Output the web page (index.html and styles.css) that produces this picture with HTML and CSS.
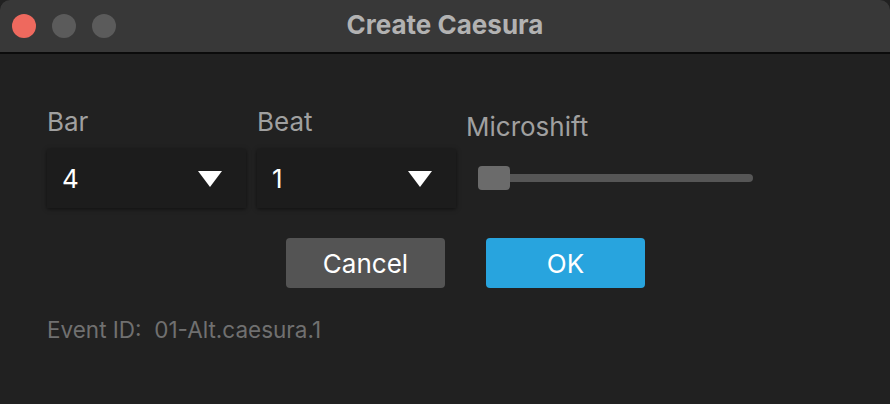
FILE: index.html
```html
<!DOCTYPE html>
<html>
<head>
<meta charset="utf-8">
<link rel="stylesheet" href="styles.css">
</head>
<body>
<div class="window">
  <div class="titlebar">
    <div class="lights">
      <span class="light red"></span>
      <span class="light gray"></span>
      <span class="light gray"></span>
    </div>
    <div class="title">Create Caesura</div>
  </div>
  <div class="content">
    <div class="fields">
      <div class="field">
        <div class="label">Bar</div>
        <div class="select"><span class="value">4</span><span class="caret"></span></div>
      </div>
      <div class="field">
        <div class="label">Beat</div>
        <div class="select"><span class="value">1</span><span class="caret"></span></div>
      </div>
      <div class="field micro">
        <div class="label">Microshift</div>
        <div class="slider"><div class="track"><div class="thumb"></div></div></div>
      </div>
    </div>
    <div class="buttons">
      <button class="btn cancel">Cancel</button>
      <button class="btn ok">OK</button>
    </div>
    <div class="event">Event ID:&nbsp; 01-Alt.caesura.1</div>
  </div>
</div>
</body>
</html>
```
FILE: styles.css
```css
html, body {
  margin: 0;
  padding: 0;
  background: #212121;
  width: 890px;
  height: 404px;
  overflow: hidden;
  font-family: Inter, "Noto Sans", sans-serif;
}
.window {
  width: 890px;
  height: 404px;
  background: #212121;
  border-radius: 10px 10px 0 0;
  overflow: hidden;
}
.titlebar {
  height: 52px;
  background: #383838;
  border-bottom: 2px solid #0b0b0b;
  display: flex;
  align-items: center;
  position: relative;
}
.lights {
  display: flex;
  gap: 16px;
  margin-left: 12px;
}
.light {
  width: 24px;
  height: 24px;
  border-radius: 50%;
  display: block;
}
.red { background: #ee695e; }
.gray { background: #5b5b5b; }
.title {
  position: absolute;
  left: 0;
  right: 0;
  top: 0;
  line-height: 50px;
  text-align: center;
  font-weight: 700;
  font-size: 26px;
  color: #b2b2b2;
}
.content {
  padding: 52px 0 0 47px;
}
.fields {
  display: flex;
  gap: 10px;
}
.field {
  width: 200px;
}
.field.micro {
  width: 300px;
  margin-left: -1px;
}
.label {
  font-size: 26px;
  line-height: 32px;
  color: #a0a0a0;
  height: 43px;
}
.micro .label {
  padding-top: 5px;
  height: 38px;
}
.select {
  height: 59px;
  width: 199px;
  background: #1c1c1c;
  box-shadow: 0 1px 4px rgba(0,0,0,0.55);
  display: flex;
  align-items: center;
  justify-content: space-between;
  box-sizing: border-box;
  padding: 0 24px 0 15px;
}
.value {
  font-size: 26px;
  color: #ffffff;
}
.caret {
  width: 0;
  height: 0;
  border-left: 12px solid transparent;
  border-right: 12px solid transparent;
  border-top: 16px solid #ffffff;
  margin-top: 1px;
}
.slider {
  padding-top: 25px;
  padding-left: 12px;
}
.track {
  width: 275px;
  height: 8px;
  border-radius: 4px;
  background: #565656;
  position: relative;
}
.thumb {
  position: absolute;
  left: 0;
  top: -8px;
  width: 32px;
  height: 24px;
  border-radius: 4px;
  background: #6b6b6b;
}
.buttons {
  display: flex;
  gap: 41px;
  margin-top: 30px;
  margin-left: 239px;
}
.btn {
  width: 159px;
  height: 50px;
  border: none;
  border-radius: 4px;
  font-family: Inter, "Noto Sans", sans-serif;
  font-size: 26px;
  color: #ffffff;
  padding: 0;
}
.cancel { background: #545454; }
.ok { background: #28a4de; }
.event {
  margin-top: 28px;
  font-size: 22.5px;
  color: #707070;
  line-height: 28px;
}
```
